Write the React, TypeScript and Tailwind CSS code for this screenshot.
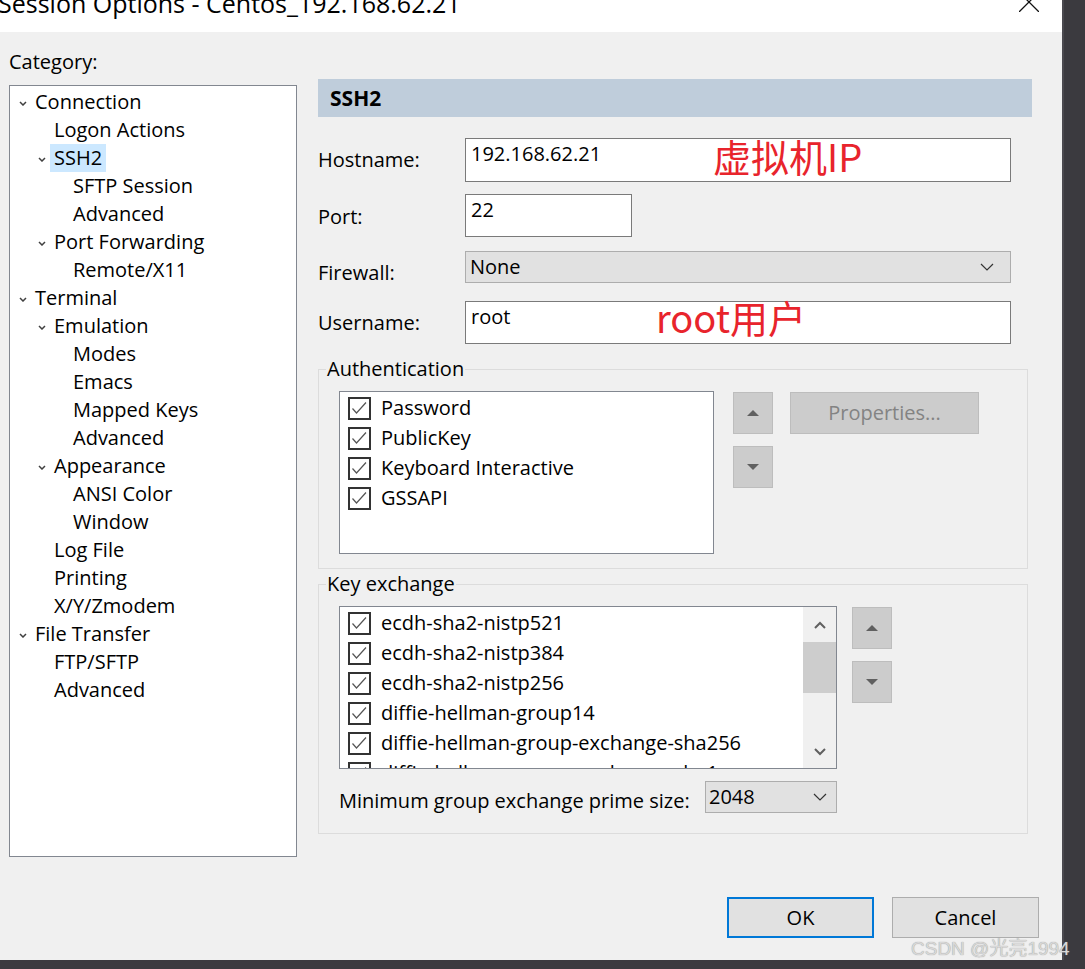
import React from "react";

type TreeNode = { label: string; level: 0 | 1 | 2; open?: boolean; selected?: boolean };

const tree: TreeNode[] = [
  { label: "Connection", level: 0, open: true },
  { label: "Logon Actions", level: 1 },
  { label: "SSH2", level: 1, open: true, selected: true },
  { label: "SFTP Session", level: 2 },
  { label: "Advanced", level: 2 },
  { label: "Port Forwarding", level: 1, open: true },
  { label: "Remote/X11", level: 2 },
  { label: "Terminal", level: 0, open: true },
  { label: "Emulation", level: 1, open: true },
  { label: "Modes", level: 2 },
  { label: "Emacs", level: 2 },
  { label: "Mapped Keys", level: 2 },
  { label: "Advanced", level: 2 },
  { label: "Appearance", level: 1, open: true },
  { label: "ANSI Color", level: 2 },
  { label: "Window", level: 2 },
  { label: "Log File", level: 1 },
  { label: "Printing", level: 1 },
  { label: "X/Y/Zmodem", level: 1 },
  { label: "File Transfer", level: 0, open: true },
  { label: "FTP/SFTP", level: 1 },
  { label: "Advanced", level: 1 },
];

const indent = ["pl-[9px]", "pl-[28px]", "pl-[47px]"];

const authMethods = ["Password", "PublicKey", "Keyboard Interactive", "GSSAPI"];
const kexMethods = [
  "ecdh-sha2-nistp521",
  "ecdh-sha2-nistp384",
  "ecdh-sha2-nistp256",
  "diffie-hellman-group14",
  "diffie-hellman-group-exchange-sha256",
  "diffie-hellman-group-exchange-sha1",
];

function TreeChevron() {
  return (
    <svg width="8" height="5" viewBox="0 0 8 5" className="mt-[2px]">
      <path d="M1 1 L4 4 L7 1" fill="none" stroke="#404040" strokeWidth="1.5" />
    </svg>
  );
}

function DropChevron() {
  return (
    <svg width="14" height="8" viewBox="0 0 14 8">
      <path d="M1 1 L7 7 L13 1" fill="none" stroke="#333" strokeWidth="1.2" />
    </svg>
  );
}

function Check() {
  return (
    <span className="w-[23px] h-[23px] border-2 border-[#333] bg-white flex items-center justify-center shrink-0">
      <svg width="19" height="19" viewBox="0 0 19 19">
        <path d="M2.5 9.5 L6.5 14 L16 3.5" fill="none" stroke="#555" strokeWidth="1.2" />
      </svg>
    </span>
  );
}

function ArrowBtn({ up }: { up?: boolean }) {
  return (
    <div className="w-[40px] h-[42px] bg-[#cccccc] border border-[#bdbdbd] flex items-center justify-center">
      <svg width="12" height="6" viewBox="0 0 12 6">
        <path d={up ? "M0 6 L6 0 L12 6 Z" : "M0 0 L12 0 L6 6 Z"} fill="#606060" />
      </svg>
    </div>
  );
}

function CheckRow({ label }: { label: string }) {
  return (
    <div className="h-[30px] flex items-center pl-[8px] gap-[10px] whitespace-nowrap">
      <Check />
      <span>{label}</span>
    </div>
  );
}

function ScrollArrow({ up }: { up?: boolean }) {
  return (
    <svg width="12" height="8" viewBox="0 0 12 8">
      <path d={up ? "M1 7 L6 2 L11 7" : "M1 1 L6 6 L11 1"} fill="none" stroke="#606060" strokeWidth="2" />
    </svg>
  );
}

export default function App() {
  return (
    <div className="relative w-[1085px] h-[969px] bg-[#3b3a3f] overflow-hidden font-['Open_Sans',sans-serif] text-[20px] leading-[24px] text-black">
      <div className="w-[1064px] h-[960px] bg-[#f0f0f0] border-r-2 border-[#4a494f] flex flex-col">
        {/* title bar */}
        <div className="relative h-[32px] bg-white overflow-hidden shrink-0">
          <div className="text-[25px] leading-[25px] mt-[-9px] ml-[-2px] whitespace-nowrap">
            Session Options - Centos_192.168.62.21
          </div>
          <svg width="20" height="20" viewBox="0 0 20 20" className="absolute left-[1019px] top-[-8px]">
            <path d="M0 0 L20 20 M20 0 L0 20" stroke="#111" strokeWidth="1.3" />
          </svg>
        </div>

        <div className="flex">
          {/* category */}
          <div className="ml-[9px] w-[288px]">
            <div className="mt-[18px]">Category:</div>
            <div className="mt-[11px] h-[772px] border border-[#828790] bg-white pt-[2px]">
              {tree.map((n, i) => (
                <div key={i} className={`h-[28px] flex items-center whitespace-nowrap ${indent[n.level]}`}>
                  <span className="w-[16px] flex items-center">{n.open && <TreeChevron />}</span>
                  {n.selected ? (
                    <span className="h-[28px] flex items-center bg-[#cce8ff] ml-[-4px] pl-[4px] pr-[4px]">{n.label}</span>
                  ) : (
                    <span>{n.label}</span>
                  )}
                </div>
              ))}
            </div>
          </div>

          {/* SSH2 panel */}
          <div className="ml-[21px] w-[714px]">
            <div className="mt-[47px] h-[38px] bg-[#bfcddb] pl-[12px] flex items-center font-bold text-[21px]">SSH2</div>

            <div className="mt-[21px] h-[44px] flex">
              <div className="w-[147px] pt-[10px]">Hostname:</div>
              <div className="relative w-[546px] h-[44px] border border-[#7a7a7a] bg-white pl-[5px] pt-[3px]">
                192.168.62.21
                <span className="absolute left-[247px] top-[-2px] text-[38px] leading-[38px] text-[#e8242c] font-['Noto_Sans_CJK_SC',sans-serif] whitespace-nowrap">
                  虚拟机IP
                </span>
              </div>
            </div>

            <div className="mt-[12px] h-[43px] flex">
              <div className="w-[147px] pt-[11px]">Port:</div>
              <div className="w-[167px] h-[43px] border border-[#7a7a7a] bg-white pl-[5px] pt-[3px]">22</div>
            </div>

            <div className="mt-[14px] h-[32px] flex">
              <div className="w-[147px] pt-[10px]">Firewall:</div>
              <div className="w-[546px] h-[32px] border border-[#adadad] bg-[#e1e1e1] pl-[4px] pr-[16px] flex items-center justify-between">
                <span>None</span>
                <DropChevron />
              </div>
            </div>

            <div className="mt-[18px] h-[43px] flex">
              <div className="w-[147px] pt-[10px]">Username:</div>
              <div className="relative w-[546px] h-[43px] border border-[#7a7a7a] bg-white pl-[5px] pt-[3px]">
                root
                <span className="absolute left-[190px] top-[-4px] text-[38px] leading-[38px] text-[#e8242c] font-['Noto_Sans_CJK_SC',sans-serif] whitespace-nowrap">
                  root用户
                </span>
              </div>
            </div>

            {/* Authentication */}
            <div className="relative mt-[25px] w-[710px] h-[200px] border border-[#dcdcdc]">
              <span className="absolute left-[7px] top-[-13px] bg-[#f0f0f0] px-[1px]">Authentication</span>
              <div className="flex mt-[21px] ml-[20px]">
                <div className="w-[375px] h-[163px] border border-[#828790] bg-white pt-[1px] overflow-hidden">
                  {authMethods.map((m) => (
                    <CheckRow key={m} label={m} />
                  ))}
                </div>
                <div className="ml-[19px] mt-[1px] flex flex-col gap-[12px]">
                  <ArrowBtn up />
                  <ArrowBtn />
                </div>
                <div className="ml-[17px] mt-[1px] w-[189px] h-[42px] bg-[#cccccc] border border-[#bdbdbd] flex items-center justify-center text-[#838383]">
                  Properties...
                </div>
              </div>
            </div>

            {/* Key exchange */}
            <div className="relative mt-[15px] w-[710px] h-[250px] border border-[#dcdcdc]">
              <span className="absolute left-[7px] top-[-13px] bg-[#f0f0f0] px-[1px]">Key exchange</span>
              <div className="flex mt-[21px] ml-[20px]">
                <div className="w-[498px] h-[163px] border border-[#828790] bg-white flex overflow-hidden">
                  <div className="flex-1 pt-[1px] overflow-hidden">
                    {kexMethods.map((m) => (
                      <CheckRow key={m} label={m} />
                    ))}
                  </div>
                  <div className="w-[33px] bg-[#f0f0f0] flex flex-col">
                    <div className="h-[35px] flex items-center justify-center">
                      <ScrollArrow up />
                    </div>
                    <div className="h-[51px] bg-[#cdcdcd]" />
                    <div className="flex-1" />
                    <div className="h-[33px] flex items-center justify-center">
                      <ScrollArrow />
                    </div>
                  </div>
                </div>
                <div className="ml-[15px] mt-[1px] flex flex-col gap-[12px]">
                  <ArrowBtn up />
                  <ArrowBtn />
                </div>
              </div>
              <div className="flex mt-[12px] ml-[20px]">
                <div className="w-[366px] pt-[8px] whitespace-nowrap">Minimum group exchange prime size:</div>
                <div className="w-[132px] h-[32px] border border-[#adadad] bg-[#e1e1e1] pl-[3px] pr-[9px] flex items-center justify-between">
                  <span>2048</span>
                  <DropChevron />
                </div>
              </div>
            </div>
          </div>
        </div>

        {/* dialog buttons */}
        <div className="mt-[40px] flex justify-end gap-[18px] pr-[23px]">
          <div className="w-[147px] h-[41px] border-2 border-[#0078d7] bg-[#e1e1e1] flex items-center justify-center">OK</div>
          <div className="w-[147px] h-[41px] border border-[#adadad] bg-[#e1e1e1] flex items-center justify-center">Cancel</div>
        </div>
      </div>

      <span className="absolute left-[911px] top-[937px] text-[19px] leading-[24px] text-[#d8d8d8] font-['Liberation_Sans','Noto_Sans_CJK_SC',sans-serif] whitespace-nowrap [text-shadow:0_0_1px_#8a8a8a]">
        CSDN @光亮1994
      </span>
    </div>
  );
}
